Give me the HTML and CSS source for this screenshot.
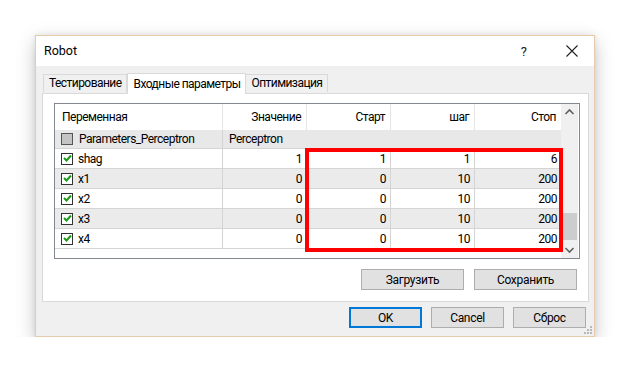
FILE: index.html
```html
<!DOCTYPE html>
<html>
<head>
<meta charset="utf-8">
<link rel="stylesheet" href="styles.css">
</head>
<body>
<div class="window">
  <div class="titlebar">
    <span class="title">Robot</span>
    <span class="help">?</span>
    <svg class="close" width="12" height="12" viewBox="0 0 12 12"><path d="M0.5 0.5 L11.5 11.5 M11.5 0.5 L0.5 11.5" stroke="#222" stroke-width="1.1" fill="none"/></svg>
  </div>
  <div class="body">
    <div class="tabs">
      <div class="tab">Тестирование</div>
      <div class="tab active">Входные параметры</div>
      <div class="tab">Оптимизация</div>
    </div>
    <div class="panel">
      <div class="grid">
        <div class="table">
          <div class="row header">
            <div class="cell name">Переменная</div>
            <div class="cell num">Значение</div>
            <div class="cell num">Старт</div>
            <div class="cell num">шаг</div>
            <div class="cell num">Стоп</div>
          </div>
          <div class="row group">
            <div class="cell name"><span class="cb gray"></span>Parameters_Perceptron</div>
            <div class="cell span">Perceptron</div>
          </div>
          <div class="row">
            <div class="cell name"><span class="cb"><svg width="9" height="9" viewBox="0 0 9 9"><path d="M1 4 L3.5 6.5 L8 1.5" stroke="#1a9a1a" stroke-width="2" fill="none"/></svg></span>shag</div>
            <div class="cell num">1</div><div class="cell num">1</div><div class="cell num">1</div><div class="cell num">6</div>
          </div>
          <div class="row alt">
            <div class="cell name"><span class="cb"><svg width="9" height="9" viewBox="0 0 9 9"><path d="M1 4 L3.5 6.5 L8 1.5" stroke="#1a9a1a" stroke-width="2" fill="none"/></svg></span>x1</div>
            <div class="cell num">0</div><div class="cell num">0</div><div class="cell num">10</div><div class="cell num">200</div>
          </div>
          <div class="row">
            <div class="cell name"><span class="cb"><svg width="9" height="9" viewBox="0 0 9 9"><path d="M1 4 L3.5 6.5 L8 1.5" stroke="#1a9a1a" stroke-width="2" fill="none"/></svg></span>x2</div>
            <div class="cell num">0</div><div class="cell num">0</div><div class="cell num">10</div><div class="cell num">200</div>
          </div>
          <div class="row alt">
            <div class="cell name"><span class="cb"><svg width="9" height="9" viewBox="0 0 9 9"><path d="M1 4 L3.5 6.5 L8 1.5" stroke="#1a9a1a" stroke-width="2" fill="none"/></svg></span>x3</div>
            <div class="cell num">0</div><div class="cell num">0</div><div class="cell num">10</div><div class="cell num">200</div>
          </div>
          <div class="row">
            <div class="cell name"><span class="cb"><svg width="9" height="9" viewBox="0 0 9 9"><path d="M1 4 L3.5 6.5 L8 1.5" stroke="#1a9a1a" stroke-width="2" fill="none"/></svg></span>x4</div>
            <div class="cell num">0</div><div class="cell num">0</div><div class="cell num">10</div><div class="cell num">200</div>
          </div>
          <div class="highlight"></div>
        </div>
        <div class="scrollbar">
          <svg class="arrow" width="17" height="17" viewBox="0 0 17 17"><path d="M4.5 10 L8.5 6 L12.5 10" stroke="#606060" stroke-width="1.6" fill="none"/></svg>
          <div class="track"><div class="thumb"></div></div>
          <svg class="arrow" width="17" height="17" viewBox="0 0 17 17"><path d="M4.5 7 L8.5 11 L12.5 7" stroke="#606060" stroke-width="1.6" fill="none"/></svg>
        </div>
      </div>
      <div class="panel-buttons">
        <button class="btn wide">Загрузить</button>
        <button class="btn wide">Сохранить</button>
      </div>
    </div>
    <div class="dialog-buttons">
      <button class="btn dlg default">OK</button>
      <button class="btn dlg">Cancel</button>
      <button class="btn dlg">Сброс</button>
    </div>
    <svg class="grip" width="10" height="10" viewBox="0 0 10 10" fill="#b8b8b8">
      <rect x="7" y="1" width="2" height="2"/>
      <rect x="4" y="4" width="2" height="2"/><rect x="7" y="4" width="2" height="2"/>
      <rect x="1" y="7" width="2" height="2"/><rect x="4" y="7" width="2" height="2"/><rect x="7" y="7" width="2" height="2"/>
    </svg>
  </div>
</div>
</body>
</html>
```

FILE: styles.css
```css
* { box-sizing: border-box; }
html, body { margin: 0; padding: 0; background: #ffffff; }
body {
  padding: 35px 0 0 35px;
  font-family: Roboto, "Liberation Sans", sans-serif;
  font-size: 12px;
  color: #000;
}
.window {
  width: 560px;
  height: 302px;
  border: 1px solid #e3cbab;
  background: #f0f0f0;
  box-shadow: 0 6px 18px rgba(0,0,0,0.22), 0 0 6px rgba(0,0,0,0.08);
  display: flex;
  flex-direction: column;
}
.titlebar {
  height: 30px;
  background: #ffffff;
  display: flex;
  align-items: center;
  padding-left: 8px;
}
.title { font-size: 12.5px; flex: 1; padding-bottom: 2px; }
.help { font-size: 13px; margin-right: 39px; color: #222; }
.close { margin-right: 16px; }
.body {
  flex: 1;
  position: relative;
  padding: 6px 5px 0 6px;
  display: flex;
  flex-direction: column;
}
.tabs {
  display: flex;
  align-items: flex-end;
  height: 21px;
  padding-left: 1px;
  position: relative;
  z-index: 1;
}
.tab {
  height: 18px;
  border: 1px solid #d9d9d9;
  border-bottom: none;
  background: #f0f0f0;
  padding: 0 5px 0 5px;
  line-height: 16px;
  font-size: 12px;
  letter-spacing: -0.55px;
  margin-bottom: 1px;
}
.tab:first-child { padding-right: 4px; }
.tab + .tab { border-left: none; }
.tab.active {
  height: 21px;
  background: #ffffff;
  margin-bottom: -1px;
  border-left: 1px solid #d9d9d9;
  padding: 2px 5px 0 6px;
}
.tab.active + .tab { border-left: none; }
.panel {
  height: 209px;
  background: #ffffff;
  border: 1px solid #d9d9d9;
  padding: 9px 8px 0 11px;
  display: flex;
  flex-direction: column;
}
.grid {
  height: 156px;
  border: 1px solid #828790;
  display: flex;
  font-size: 12px;
  letter-spacing: -0.5px;
}
.table {
  position: relative;
  width: 506px;
  display: flex;
  flex-direction: column;
}
.row {
  display: grid;
  grid-template-columns: 168px 84px 84px 84px 86px;
  height: 20px;
  background: #ffffff;
  border-bottom: 1px solid #d4d4d4;
}
.row.alt { background: #ebebeb; }
.row.header {
  height: 26px;
  border-bottom: none;
}
.row.group { height: 19px; background: #e8e8e8; }
.cell {
  display: flex;
  align-items: center;
  border-right: 1px solid #d4d4d4;
  padding: 0 4px 0 6px;
  white-space: nowrap;
  overflow: hidden;
}
.row.header .cell { border-right: 1px solid #e5e5e5; padding-right: 5px; padding-left: 7px; }
.row.header .cell:last-child { border-right: none; }
.cell:last-child { border-right: none; }
.cell.num { justify-content: flex-end; }
.cell.span { grid-column: 2 / 6; border-right: none; }
.cb {
  width: 12px;
  height: 12px;
  border: 1px solid #333;
  background: #fff;
  margin-right: 5px;
  display: inline-flex;
  align-items: center;
  justify-content: center;
  flex: none;
}
.cb.gray { background: #c4c4c4; border-color: #555; margin-right: 6px; }
.highlight {
  position: absolute;
  left: 250px;
  top: 44px;
  width: 258px;
  height: 104px;
  border: 4px solid #ff0000;
}
.scrollbar {
  width: 17px;
  background: #f0f0f0;
  display: flex;
  flex-direction: column;
}
.arrow { flex: none; }
.track { flex: 1; display: flex; flex-direction: column; justify-content: flex-end; }
.thumb { height: 27px; margin: 0 1px 1px 1px; background: #cdcdcd; }
.panel-buttons {
  display: flex;
  justify-content: flex-end;
  gap: 10px;
  margin-top: 10px;
  padding-right: 3px;
}
.btn {
  height: 21px;
  border: 1px solid #adadad;
  background: #e1e1e1;
  font-family: Roboto, "Liberation Sans", sans-serif;
  font-size: 12px;
  letter-spacing: -0.3px;
  color: #000;
  padding: 0;
}
.btn.wide { width: 103px; }
.dialog-buttons {
  display: flex;
  justify-content: flex-end;
  gap: 9px;
  margin-top: 5px;
  padding-right: 3px;
}
.btn.dlg { width: 73px; }
.btn.default { border: 2px solid #0078d7; }
.grip { position: absolute; right: 1px; bottom: 1px; }
```
